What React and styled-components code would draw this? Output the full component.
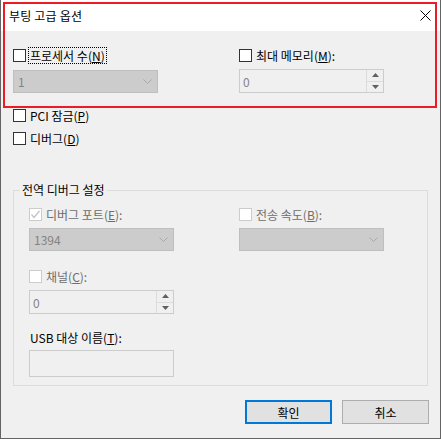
import React from 'react';
import styled, { createGlobalStyle } from 'styled-components';

const Global = createGlobalStyle`
  html, body { margin: 0; padding: 0; background: #f0f0f0; }
  body {
    font-family: "Noto Sans CJK KR", "Noto Sans", sans-serif;
    font-size: 12px;
    color: #000;
  }
  * { box-sizing: border-box; }
`;

const Window = styled.div`
  position: relative;
  width: 441px;
  height: 439px;
  border: 1px solid #646464;
  border-top: none;
  background: #f0f0f0;
  display: flex;
  flex-direction: column;
`;

const TitleBar = styled.div`
  height: 31px;
  flex: none;
  background: #fff;
  display: flex;
  align-items: center;
  justify-content: space-between;
  padding: 0 9px 0 8px;
`;

const Title = styled.span`
  font-size: 12px;
  line-height: 16px;
  letter-spacing: 0.2px;
`;

const Body = styled.div`
  flex: 1;
  display: flex;
  flex-direction: column;
  padding: 16px 12px 0 12px;
`;

const TwoCols = styled.div`
  display: grid;
  grid-template-columns: 145px 145px;
  column-gap: ${p => p.$gap}px;
`;

const Col = styled.div`
  display: flex;
  flex-direction: column;
`;

const CheckRow = styled.div`
  display: flex;
  align-items: center;
  height: 17px;
  margin-top: ${p => p.$mt || 0}px;
  color: ${p => (p.$disabled ? '#6d6d6d' : '#000')};
`;

const Box = styled.span`
  width: 13px;
  height: 13px;
  flex: none;
  border: 1px solid ${p => (p.$disabled ? '#cccccc' : '#333333')};
  background: #fff;
  display: flex;
  align-items: center;
  justify-content: center;
`;

const Label = styled.span`
  margin-left: 2px;
  padding: 0 1px;
  line-height: 15px;
  border: 1px ${p => (p.$focus ? 'dotted #000' : 'solid transparent')};
  white-space: nowrap;
`;

const U = styled.span`
  text-decoration: underline;
  text-underline-offset: 1px;
`;

const PlainLabel = styled.div`
  height: 17px;
  line-height: 17px;
  padding-left: 1px;
  margin-top: ${p => p.$mt || 0}px;
`;

const Combo = styled.div`
  width: 145px;
  height: 23px;
  margin-top: ${p => p.$mt || 0}px;
  border: 1px solid #bfbfbf;
  background: #cccccc;
  color: #838383;
  display: flex;
  align-items: center;
  justify-content: space-between;
  padding: 0 5px 0 4px;
  line-height: 15px;
`;

const Spin = styled.div`
  width: 145px;
  height: 24px;
  margin-top: ${p => p.$mt || 0}px;
  border: 1px solid #cccccc;
  background: #f0f0f0;
  color: #838383;
  display: flex;
`;

const SpinText = styled.div`
  flex: 1;
  padding-left: 3px;
  display: flex;
  align-items: center;
  line-height: 15px;
`;

const SpinButtons = styled.div`
  width: 17px;
  display: flex;
  flex-direction: column;
  border-left: 1px solid #dcdcdc;
`;

const SpinButton = styled.div`
  flex: 1;
  display: flex;
  align-items: center;
  justify-content: center;
  background: #f0f0f0;
  & + & { border-top: 1px solid #dcdcdc; }
`;

const TextBox = styled.div`
  width: 145px;
  height: 27px;
  margin-top: ${p => p.$mt || 0}px;
  border: 1px solid #cccccc;
  background: #f0f0f0;
`;

const Group = styled.fieldset`
  margin: 35px 0 0;
  padding: 0;
  min-width: 0;
  border: 1px solid #dcdcdc;
`;

const Legend = styled.legend`
  margin-left: 6px;
  padding: 0 2px;
  font-size: 12px;
  line-height: 16px;
`;

const GroupInner = styled.div`
  padding: 8px 0 8px 15px;
  color: #6d6d6d;
  display: flex;
  flex-direction: column;
`;

const GroupLabel = styled(PlainLabel)`
  color: #000;
`;

const ButtonRow = styled.div`
  display: flex;
  justify-content: flex-end;
  gap: 10px;
  margin-top: 14px;
  margin-right: -1px;
`;

const Button = styled.div`
  width: 87px;
  height: 24px;
  background: #e1e1e1;
  border: ${p => (p.$default ? '2px solid #0078d7' : '1px solid #adadad')};
  display: flex;
  align-items: center;
  justify-content: center;
  line-height: 15px;
`;

const Highlight = styled.div`
  position: absolute;
  left: 2px;
  top: 2px;
  width: 434px;
  height: 106px;
  border: 2px solid #ed1c24;
  pointer-events: none;
`;

const Chevron = () => (
  <svg width="9" height="5" viewBox="0 0 9 5">
    <polyline points="0.5,0.5 4.5,4.5 8.5,0.5" fill="none" stroke="#a8a8a8" strokeWidth="1" />
  </svg>
);

const Arrow = ({ down }) => (
  <svg width="7" height="4" viewBox="0 0 7 4">
    <polygon points={down ? '0,0 7,0 3.5,4' : '0,4 7,4 3.5,0'} fill="#606060" />
  </svg>
);

const Close = () => (
  <svg width="11" height="11" viewBox="0 0 11 11">
    <path d="M0.5 0.5 L10.5 10.5 M10.5 0.5 L0.5 10.5" stroke="#000" strokeWidth="1" />
  </svg>
);

const Check = ({ disabled, checked, children, focus, mt }) => (
  <CheckRow $disabled={disabled} $mt={mt}>
    <Box $disabled={disabled}>
      {checked && (
        <svg width="11" height="11" viewBox="0 0 11 11">
          <polyline points="1.5,5.5 4,8.5 9.5,2" fill="none" stroke="#c2c2c2" strokeWidth="1.3" />
        </svg>
      )}
    </Box>
    <Label $focus={focus}>{children}</Label>
  </CheckRow>
);

const SpinBox = ({ value, mt }) => (
  <Spin $mt={mt}>
    <SpinText>{value}</SpinText>
    <SpinButtons>
      <SpinButton><Arrow /></SpinButton>
      <SpinButton><Arrow down /></SpinButton>
    </SpinButtons>
  </Spin>
);

export default function App() {
  return (
    <>
      <Global />
      <Window>
        <TitleBar>
          <Title>부팅 고급 옵션</Title>
          <Close />
        </TitleBar>
        <Body>
          <TwoCols $gap={81}>
            <Col>
              <Check focus>프로세서 수(<U>N</U>)</Check>
              <Combo $mt={6}>
                <span>1</span>
                <Chevron />
              </Combo>
            </Col>
            <Col>
              <Check>최대 메모리(<U>M</U>):</Check>
              <SpinBox value="0" mt={5} />
            </Col>
          </TwoCols>
          <Check mt={14}>PCI 잠금(<U>P</U>)</Check>
          <Check mt={6}>디버그(<U>D</U>)</Check>
          <Group>
            <Legend>전역 디버그 설정</Legend>
            <GroupInner>
              <TwoCols $gap={65}>
                <Col>
                  <Check disabled checked>디버그 포트(<U>E</U>):</Check>
                  <Combo $mt={5}>
                    <span>1394</span>
                    <Chevron />
                  </Combo>
                </Col>
                <Col>
                  <Check disabled>전송 속도(<U>B</U>):</Check>
                  <Combo $mt={5}>
                    <span />
                    <Chevron />
                  </Combo>
                </Col>
              </TwoCols>
              <Check disabled mt={17}>채널(<U>C</U>):</Check>
              <SpinBox value="0" mt={5} />
              <GroupLabel $mt={15}>USB 대상 이름(<U>T</U>):</GroupLabel>
              <TextBox $mt={4} />
            </GroupInner>
          </Group>
          <ButtonRow>
            <Button $default>확인</Button>
            <Button>취소</Button>
          </ButtonRow>
        </Body>
        <Highlight />
      </Window>
    </>
  );
}
